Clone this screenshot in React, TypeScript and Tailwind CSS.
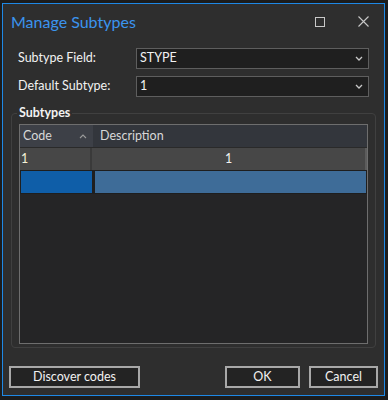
import React from 'react'

const font = { fontFamily: 'Lato, "Noto Sans", sans-serif' }

function Chevron() {
  return (
    <svg width="8" height="5" viewBox="0 0 8 5" className="text-[#c8c8c8]">
      <path d="M1 1 L4 4 L7 1" fill="none" stroke="currentColor" strokeWidth="1.3" />
    </svg>
  )
}

function Combo({ value }: { value: string }) {
  return (
    <div className="flex h-[21px] w-[233px] items-center justify-between border border-[#5e5e5e] bg-[#1f1f1f] pl-[3px] pr-[5px] text-[12.5px] text-[#f2f2f2]">
      <span>{value}</span>
      <Chevron />
    </div>
  )
}

function Button({ label, width }: { label: string; width: string }) {
  return (
    <button
      type="button"
      className={`flex h-[22px] items-center justify-center border-2 border-[#a8a8a8] bg-[#232323] text-[12.5px] text-[#f2f2f2] ${width}`}
    >
      {label}
    </button>
  )
}

export default function App() {
  return (
    <div className="h-[400px] w-[388px] bg-[#1c1c1c] pl-[2px] pt-[3px]" style={font}>
      <div className="flex h-[393px] w-[383px] flex-col border border-[#1e88e5] bg-[#2e2e2e]">
        {/* title bar */}
        <div className="flex h-[35px] items-center justify-between pl-[8px] pr-[15px]">
          <span className="text-[16px] text-[#3b94ee]">Manage Subtypes</span>
          <div className="flex items-center gap-[33px]">
            <svg width="10" height="10" viewBox="0 0 10 10">
              <rect x="0.5" y="0.5" width="9" height="9" fill="none" stroke="#c8c8c8" strokeWidth="1" />
            </svg>
            <svg width="11" height="11" viewBox="0 0 11 11">
              <path d="M0.5 0.5 L10.5 10.5 M10.5 0.5 L0.5 10.5" stroke="#c8c8c8" strokeWidth="1.1" />
            </svg>
          </div>
        </div>

        {/* form rows */}
        <div className="mt-[9px] flex flex-col gap-[7px] pl-[15px]">
          <div className="flex items-center">
            <span className="w-[118px] text-[12.5px] text-[#f2f2f2]">Subtype Field:</span>
            <Combo value="STYPE" />
          </div>
          <div className="flex items-center">
            <span className="w-[118px] text-[12.5px] text-[#f2f2f2]">Default Subtype:</span>
            <Combo value="1" />
          </div>
        </div>

        {/* subtypes group */}
        <div className="relative mx-[8px] mt-[16px] h-[235px] rounded-[4px] border border-[#404040] px-[7px] pb-[3px] pt-[10px]">
          <span className="absolute left-[5px] top-[-10px] bg-[#2e2e2e] px-[2px] text-[12.5px] font-bold leading-[18px] text-[#f2f2f2]">
            Subtypes
          </span>
          <div className="flex h-full flex-col border border-[#6e6e6e] bg-[#252526] text-[12.5px] text-[#f2f2f2]">
            <div className="flex h-[22px] shrink-0">
              <div className="flex w-[73px] items-center justify-between bg-[#3d4047] pl-[3px] pr-[6px] text-[#d8d8d8]">
                <span>Code</span>
                <svg width="8" height="5" viewBox="0 0 8 5">
                  <path d="M1 4 L4 1 L7 4" fill="none" stroke="#9a9a9a" strokeWidth="1.1" />
                </svg>
              </div>
              <div className="flex flex-1 items-center bg-[#33363c] pl-[7px] text-[#d8d8d8]">Description</div>
            </div>
            <div className="flex h-[23px] shrink-0 border-t border-[#2a2a2a] bg-[#474747]">
              <div className="flex w-[72px] items-center border-r-2 border-[#3a3a3a] pl-[1px] text-[#f5f1d8]">1</div>
              <div className="flex flex-1 items-center justify-center border-r-2 border-[#5c5c5c]">1</div>
            </div>
            <div className="flex h-[24px] shrink-0 gap-[3px] border-y border-[#1e1e1e] bg-[#1f1f1f] px-[1px]">
              <div className="w-[71px] bg-[#0f5ea8]" />
              <div className="flex-1 bg-[#3e6c98]" />
            </div>
            <div className="flex-1" />
          </div>
        </div>

        {/* buttons */}
        <div className="mt-[18px] flex items-center px-[6px]">
          <Button label="Discover codes" width="w-[131px]" />
          <div className="flex-1" />
          <div className="flex gap-[9px]">
            <Button label="OK" width="w-[75px]" />
            <Button label="Cancel" width="w-[69px]" />
          </div>
        </div>
      </div>
    </div>
  )
}
